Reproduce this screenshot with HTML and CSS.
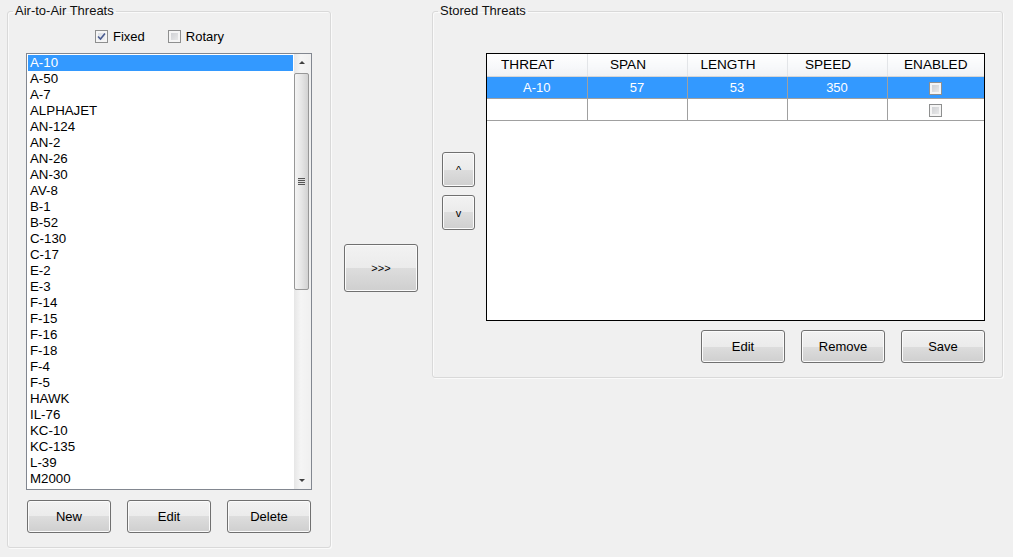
FILE: index.html
```html
<!DOCTYPE html>
<html>
    <head>
        <title>Threat Manager</title>
        <link rel="stylesheet" href="styles.css">
    </head>
<body>
    <div class="window">
        <fieldset class="group group-left">
            <legend>Air-to-Air Threats</legend>

            <div class="check-row">
                <label class="check"><span class="box checked"><svg viewBox="0 0 9 9" width="9" height="9"><path d="M1 4.5 L3.5 7 L8 1.5" fill="none" stroke="#4a5c90" stroke-width="1.6"/></svg></span>Fixed</label>
                <label class="check rotary"><span class="box"></span>Rotary</label>
            </div>

            <div class="listbox">
                <ul class="threat-list">
                    <li class="selected">A-10</li>
                    <li>A-50</li>
                    <li>A-7</li>
                    <li>ALPHAJET</li>
                    <li>AN-124</li>
                    <li>AN-2</li>
                    <li>AN-26</li>
                    <li>AN-30</li>
                    <li>AV-8</li>
                    <li>B-1</li>
                    <li>B-52</li>
                    <li>C-130</li>
                    <li>C-17</li>
                    <li>E-2</li>
                    <li>E-3</li>
                    <li>F-14</li>
                    <li>F-15</li>
                    <li>F-16</li>
                    <li>F-18</li>
                    <li>F-4</li>
                    <li>F-5</li>
                    <li>HAWK</li>
                    <li>IL-76</li>
                    <li>KC-10</li>
                    <li>KC-135</li>
                    <li>L-39</li>
                    <li>M2000</li>
                </ul>
                <div class="scrollbar">
                    <div class="arrow arrow-up"></div>
                    <div class="thumb"><span class="grip"></span></div>
                    <div class="arrow arrow-down"></div>
                </div>
            </div>

            <div class="button-row">
                <button class="button">New</button>
                <button class="button">Edit</button>
                <button class="button">Delete</button>
            </div>
        </fieldset>

        <div class="middle">
            <button class="button button-add">&gt;&gt;&gt;</button>
        </div>

        <fieldset class="group group-right">
            <legend>Stored Threats</legend>

            <div class="stored-body">
                <div class="move-buttons">
                    <button class="button button-move">^</button>
                    <button class="button button-move">v</button>
                </div>

                <div class="stored-main">
                    <div class="grid">
                        <table>
                            <thead>
                                <tr>
                                    <th>THREAT</th>
                                    <th>SPAN</th>
                                    <th>LENGTH</th>
                                    <th>SPEED</th>
                                    <th>ENABLED</th>
                                </tr>
                            </thead>
                            <tbody>
                                <tr class="selected">
                                    <td>A-10</td>
                                    <td>57</td>
                                    <td>53</td>
                                    <td>350</td>
                                    <td><span class="box"></span></td>
                                </tr>
                                <tr>
                                    <td></td>
                                    <td></td>
                                    <td></td>
                                    <td></td>
                                    <td><span class="box"></span></td>
                                </tr>
                            </tbody>
                        </table>
                    </div>

                    <div class="button-row button-row-right">
                        <button class="button">Edit</button>
                        <button class="button">Remove</button>
                        <button class="button">Save</button>
                    </div>
                </div>
            </div>
        </fieldset>
    </div>
</body>
</html>
```

FILE: styles.css
```css
body {
    margin: 0;
    background-color: #f0f0f0;
    font-family: "Liberation Sans", Arial, sans-serif;
    font-size: 13px;
    color: #000;
}

.window {
    display: flex;
    align-items: flex-start;
    width: 1013px;
    height: 557px;
    padding: 4px 0 0 7px;
    box-sizing: border-box;
}

.group {
    margin: 0;
    padding: 0;
    min-width: 0;
    border: 1px solid #d9d9d9;
    border-radius: 3px;
    box-shadow: inset 1px 1px 0 #fafafa, 1px 1px 0 #fafafa;
    box-sizing: border-box;
}

.group legend {
    margin-left: 5px;
    padding: 0 2px;
    line-height: 14px;
    font-size: 13px;
    color: #111;
}

.group-left {
    width: 324px;
    height: 544px;
}

.group-right {
    width: 571px;
    height: 374px;
    margin-left: 14px;
}

/* checkboxes */

.check-row {
    display: flex;
    align-items: center;
    margin-top: 12px;
    padding-left: 87px;
    height: 13px;
}

.check {
    display: inline-flex;
    align-items: center;
    gap: 5px;
    line-height: 13px;
}

.rotary {
    margin-left: 23px;
}

.box {
    display: inline-flex;
    align-items: center;
    justify-content: center;
    width: 13px;
    height: 13px;
    box-sizing: border-box;
    border: 1px solid #8e8f8f;
    background: linear-gradient(135deg, #c9cbcf, #eeeeee);
    box-shadow: inset 0 0 0 2px #f5f5f5;
    vertical-align: middle;
}

.box.checked {
    background: linear-gradient(135deg, #d6dbe4, #f4f4f4);
}

/* list box */

.listbox {
    display: flex;
    width: 286px;
    height: 437px;
    margin: 10px 0 0 18px;
    border: 1px solid #828790;
    background-color: #fff;
    box-sizing: border-box;
}

.threat-list {
    flex: 1;
    list-style: none;
    margin: 0;
    padding: 1px 1px 0 1px;
    overflow: hidden;
}

.threat-list li {
    height: 16px;
    line-height: 16px;
    padding-left: 2px;
    font-size: 13.3px;
}

.threat-list li.selected {
    background-color: #3399ff;
    color: #fff;
}

.scrollbar {
    display: flex;
    flex-direction: column;
    width: 17px;
    background: linear-gradient(to right, #e6e6e6, #f5f5f5 40%, #f0f0f0);
}

.arrow {
    height: 17px;
    position: relative;
}

.arrow::after {
    content: "";
    position: absolute;
    left: 5px;
    width: 0;
    height: 0;
    border-left: 3px solid transparent;
    border-right: 3px solid transparent;
}

.arrow-up::after {
    top: 7px;
    border-bottom: 3px solid #404040;
}

.arrow-down::after {
    top: 7px;
    border-top: 3px solid #404040;
}

.thumb {
    display: flex;
    align-items: center;
    justify-content: center;
    height: 217px;
    margin: 2px 2px 0 0;
    border: 1px solid #979797;
    border-radius: 2px;
    background: linear-gradient(to right, #f4f4f4, #e6e6e6 50%, #d2d2d2);
    box-sizing: border-box;
}

.grip {
    display: block;
    width: 7px;
    height: 7px;
    background: repeating-linear-gradient(#555 0, #555 1px, #ddd 1px, #ddd 2px);
}

.scrollbar .arrow-down {
    margin-top: auto;
}

/* buttons */

.button {
    width: 84px;
    height: 33px;
    padding: 0;
    border: 1px solid #707070;
    border-radius: 3px;
    background: linear-gradient(#f2f2f2 0%, #ebebeb 50%, #dddddd 50%, #cfcfcf 100%);
    box-shadow: inset 0 0 0 1px #fbfbfb;
    font-family: "Liberation Sans", Arial, sans-serif;
    font-size: 13px;
    color: #000;
    cursor: pointer;
}

.button-row {
    display: flex;
    gap: 16px;
    margin-top: 10px;
    padding-left: 19px;
}

.button-row-right {
    justify-content: flex-end;
    padding-left: 0;
    margin-top: 9px;
}

.middle {
    margin-left: 13px;
    padding-top: 240px;
}

.button-add {
    width: 74px;
    height: 48px;
    font-size: 11px;
}

/* stored threats */

.stored-body {
    display: flex;
    padding-left: 9px;
}

.move-buttons {
    display: flex;
    flex-direction: column;
    gap: 8px;
    margin-top: 134px;
}

.button-move {
    width: 33px;
    height: 35px;
    font-size: 11px;
}

.stored-main {
    margin-left: 11px;
    margin-top: 35px;
    width: 499px;
}

.grid {
    height: 268px;
    border: 1px solid #000;
    background-color: #fff;
    box-sizing: border-box;
}

.grid table {
    width: 497px;
    border-collapse: collapse;
    table-layout: fixed;
}

.grid th {
    width: 100px;
    height: 22px;
    padding: 0 18px 0 0;
    font-size: 13.6px;
    font-weight: normal;
    text-align: center;
    background: linear-gradient(#ffffff, #f7f8fa 60%, #f1f2f4);
    border-right: 1px solid #e3e5e8;
    border-bottom: 1px solid #d5d5d5;
    box-sizing: border-box;
}

.grid th:last-child {
    width: 97px;
    padding-right: 0;
    border-right: none;
}

.grid td {
    height: 21px;
    padding: 0;
    text-align: center;
    border-right: 1px solid #a0a0a0;
    border-bottom: 1px solid #a0a0a0;
}

.grid td:last-child {
    border-right: none;
    vertical-align: top;
    padding-top: 3px;
    height: 18px;
}

.grid tr.selected td {
    background-color: #3399ff;
    color: #fff;
}
```
